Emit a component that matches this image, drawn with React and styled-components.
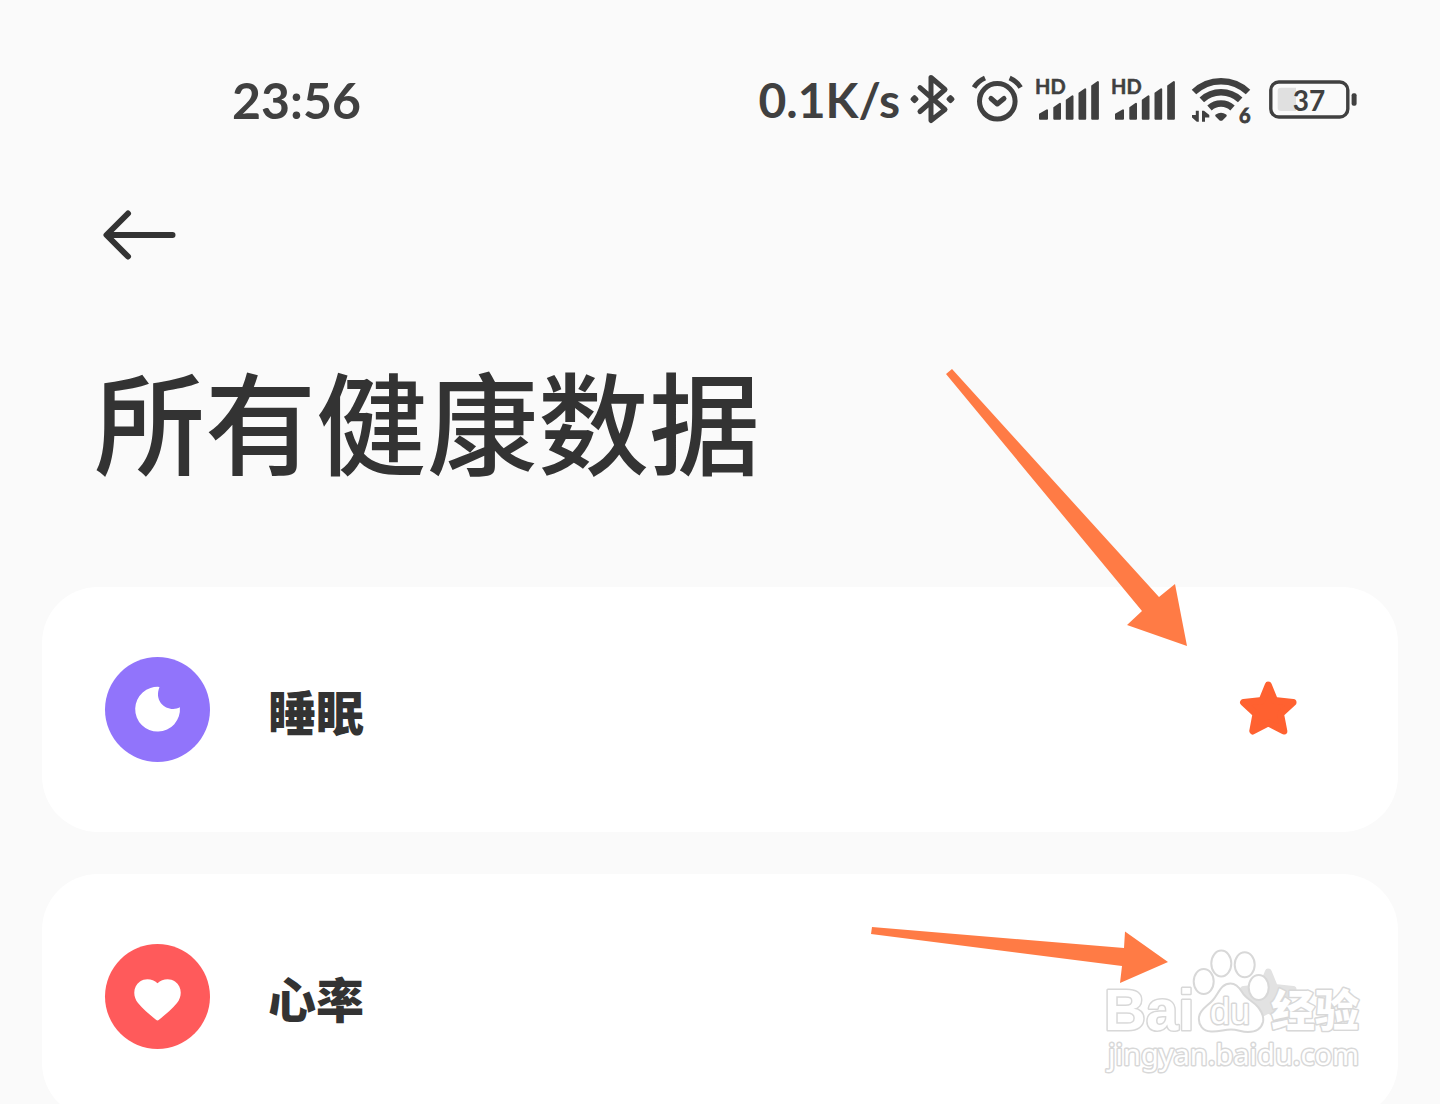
import React from "react";
import styled, { createGlobalStyle } from "styled-components";

const GlobalStyle = createGlobalStyle`
  * { box-sizing: border-box; }
  body {
    margin: 0;
    background: #fafafa;
    color: #333;
    font-family: "Noto Sans CJK SC", "Noto Sans", sans-serif;
  }
`;

const Screen = styled.div`
  position: relative;
  height: 100vh;
  overflow: hidden;
  background: #fafafa;
`;

const StatusBar = styled.div`
  display: flex;
  align-items: center;
  justify-content: space-between;
  padding: 74px 80px 0 232px;
  color: #404040;
  font: 700 48px/52px Lato, "Noto Sans", sans-serif;
`;

const Clock = styled.time`
  font-size: 50px;
`;

const StatusIcons = styled.div`
  display: flex;
  align-items: center;
  gap: 12px;

  svg {
    display: block;
    height: 52px;
    overflow: visible;
  }
  text {
    fill: #404040;
    font-family: Lato, "Noto Sans", sans-serif;
    font-weight: 700;
  }
`;

const Header = styled.header`
  padding: 76px 94px 100px;
`;

const BackButton = styled.button`
  display: block;
  width: 88px;
  height: 64px;
  padding: 0;
  border: 0;
  background: none;
  cursor: pointer;
`;

const Title = styled.h1`
  margin: 85px 0 0;
  font-size: 111px;
  font-weight: 500;
  line-height: 136px;
`;

const List = styled.ul`
  display: flex;
  flex-direction: column;
  gap: 42px;
  margin: 0;
  padding: 0 42px;
  list-style: none;
`;

const Card = styled.li`
  display: flex;
  align-items: center;
  padding: 70px 98px 70px 63px;
  border-radius: 56px;
  background: #fff;
`;

const Badge = styled.svg`
  flex: none;
  width: 105px;
  height: 105px;
  border-radius: 50%;
  background: ${(p) => p.$color};
`;

const Label = styled.span`
  flex: 1;
  padding-left: 58px;
  font-size: 48px;
  font-weight: 900;
  line-height: 72px;
`;

const StarButton = styled.button`
  width: 64px;
  height: 64px;
  padding: 0;
  border: 0;
  background: none;
  color: ${(p) => (p.$active ? "#ff6130" : "#e2e2e2")};
  cursor: pointer;

  svg { display: block; }
`;

const Pointer = styled.svg`
  position: absolute;
  top: ${(p) => p.$top}px;
  right: ${(p) => p.$right}px;
  fill: #ff7b45;
  pointer-events: none;
`;

const Watermark = styled.svg`
  position: absolute;
  top: 940px;
  right: 70px;
  pointer-events: none;
  fill: #fff;
  stroke: #d8d8d8;
  stroke-width: 2;
  stroke-linejoin: round;

  text { paint-order: stroke; stroke-width: 3; }
`;

const Bluetooth = () => (
  <svg width="44" height="52" viewBox="0 0 44 52" fill="none" stroke="#404040" strokeWidth="5" strokeLinecap="round" strokeLinejoin="round" aria-label="Bluetooth">
    <path d="M8 13.7 33 35.5 19 46.5V3.5L33 15.5 8 37.5" />
    <path d="m2.5 23.2 2 2-2 2-2-2zM38.5 23.2l2 2-2 2-2-2z" fill="#404040" strokeWidth="4" />
  </svg>
);

const Alarm = () => (
  <svg width="56" height="52" viewBox="0 0 56 52" fill="none" stroke="#404040" strokeWidth="5" strokeLinejoin="round" aria-label="Alarm">
    <circle cx="29.3" cy="27.3" r="17.8" />
    <path d="m23 24.5 6.3 5.5 6.7-5.5" strokeLinecap="round" />
    <path d="M6 13.5Q10 7 17 4M52.6 13.5Q48.6 7 41.6 4" />
  </svg>
);

const bars = [
  [3, 35.3, 9],
  [17.3, 28.7, 7.7],
  [29.8, 21.3, 7.7],
  [42.5, 14.3, 7.7],
  [55.2, 7, 7.7],
];

const Signal = () => (
  <svg width="64" height="52" viewBox="0 0 64 52" aria-label="HD signal">
    <text x="-1" y="20" fontSize="20" stroke="#404040" strokeWidth="0.5">HD</text>
    {bars.map(([x, y, w]) => (
      <path
        key={x}
        fill="#404040"
        stroke="#404040"
        strokeWidth="2"
        strokeLinejoin="round"
        d={`M${x + 1} ${Math.min(y + 5, 42)}L${x + w - 1} ${y + 1}V44.7H${x + 1}Z`}
      />
    ))}
  </svg>
);

const Wifi = () => (
  <svg width="64" height="52" viewBox="0 0 64 52" fill="none" stroke="#404040" strokeWidth="6.5" aria-label="Wi-Fi 6">
    <path d="M6 18A39 39 0 0 1 60 18M13.8 25.8A28 28 0 0 1 52.2 25.8M21.5 34A17 17 0 0 1 44.5 34" />
    <path d="M28.5 41.5Q33 38.5 37.5 41.5L33.5 45.5H32.5Z" fill="#404040" strokeWidth="2.5" strokeLinejoin="round" />
    <path d="M7.800 36.800H10.800V47.700H8.800L4 43.500V41H7.800ZM14 36.800H16L21.300 41V43.500H17V47.700H14Z" fill="#404040" stroke="none" />
    <text x="51" y="48.5" fontSize="20" stroke="#404040" strokeWidth="0.8">6</text>
  </svg>
);

const Battery = () => (
  <svg width="96" height="52" viewBox="0 0 96 52" aria-label="Battery">
    <rect x="6.8" y="8" width="77" height="35" rx="8" fill="none" stroke="#404040" strokeWidth="3.4" />
    <path d="M17 13.7H32V37H17Q13.7 37 13.7 34V17Q13.7 13.7 17 13.7Z" fill="#e0e0e0" />
    <rect x="87.6" y="19.3" width="5" height="12.4" rx="2" fill="#404040" />
    <text x="45" y="36.7" fontSize="28" textAnchor="middle">37</text>
  </svg>
);

const Star = () => (
  <svg width="64" height="64" viewBox="0 0 64 64" fill="currentColor" stroke="currentColor" strokeWidth="7" strokeLinejoin="round">
    <path d="M32.3 7 38.6 22.5 57 24.5 44.5 36 47.8 53 32.3 45 16.8 53 20 36 7.6 24.5 26 22.5Z" />
  </svg>
);

const MoonGlyph = () => (
  <path fill="#fff" d="M54.5 29.9A22.4 22.4 0 1 0 74.9 50.3C64 56 48 46 54.5 29.9Z" />
);

const HeartGlyph = () => (
  <path
    fill="#fff"
    d="M52.5 39.2C48 35 40.5 33.6 35 37.5 28 42.5 27.5 52 33 59 38.5 66 46 71.5 51 75.8Q52.5 77 54 75.8C59 71.5 66.5 66 72 59 77.5 52 77 42.5 70 37.5 64.5 33.6 57 35 52.5 39.2Z"
  />
);

const items = [
  { name: "睡眠", color: "#9174fb", Glyph: MoonGlyph, starred: true },
  { name: "心率", color: "#ff5a5b", Glyph: HeartGlyph, starred: false },
];

export default function App() {
  return (
    <Screen>
      <GlobalStyle />
      <StatusBar>
        <Clock>23:56</Clock>
        <StatusIcons>
          <span>0.1K/s</span>
          <Bluetooth />
          <Alarm />
          <Signal />
          <Signal />
          <Wifi />
          <Battery />
        </StatusIcons>
      </StatusBar>
      <Header>
        <BackButton aria-label="返回">
          <svg width="88" height="64" viewBox="0 0 88 64" fill="none" stroke="#333" strokeWidth="6" strokeLinecap="round" strokeLinejoin="round">
            <path d="M34 11.500 12.500 33 34 54.500M14 33H78.500" />
          </svg>
        </BackButton>
        <Title>所有健康数据</Title>
      </Header>
      <List>
        {items.map(({ name, color, Glyph, starred }) => (
          <Card key={name}>
            <Badge $color={color} viewBox="0 0 105 105" aria-hidden="true">
              <Glyph />
            </Badge>
            <Label>{name}</Label>
            <StarButton $active={starred} aria-pressed={starred} aria-label={`收藏${name}`}>
              <Star />
            </StarButton>
          </Card>
        ))}
      </List>
      <Pointer $top={368} $right={252} width="244" height="280" viewBox="0 0 244 280" aria-hidden="true">
        <path d="M2 6 8 1 215 229 231 216 243 278 183 257 198 243Z" />
      </Pointer>
      <Pointer $top={926} $right={270} width="300" height="60" viewBox="0 0 300 60" aria-hidden="true">
        <path d="M2 1 254 22 255 5.5 298 36 250 57 252 40 1 8Z" />
      </Pointer>
      <Watermark width="270" height="140" viewBox="0 0 270 140">
        <text x="4" y="90" fontFamily="Liberation Sans, sans-serif" fontWeight="700" fontSize="58">Bai</text>
        <path d="M130.5 43.5C136 43.5 139 47 142 52 146 59 153 61 158 67 162 72 164 77 163 82 161 90 155 92 148 92 141 92 138 89.5 131 89.5 124 89.5 119 92 111 91.5 103 91 98 85 99 77 100 69 108 66 113 60 119 53 121 43.5 130.5 43.5Z" />
        <ellipse cx="103.7" cy="41.5" rx="10" ry="12.5" />
        <ellipse cx="121.3" cy="23.5" rx="10" ry="13" />
        <ellipse cx="144.7" cy="24.7" rx="10" ry="12.5" />
        <ellipse cx="158.7" cy="47.5" rx="10" ry="12.5" />
        <text x="110" y="84" fontFamily="Liberation Sans, sans-serif" fontSize="36">du</text>
        <text x="171" y="87" fontFamily="Noto Sans CJK SC, sans-serif" fontWeight="900" fontSize="44">经验</text>
        <text x="8" y="125" fontFamily="Noto Sans, sans-serif" fontSize="29">jingyan.baidu.com</text>
      </Watermark>
    </Screen>
  );
}
